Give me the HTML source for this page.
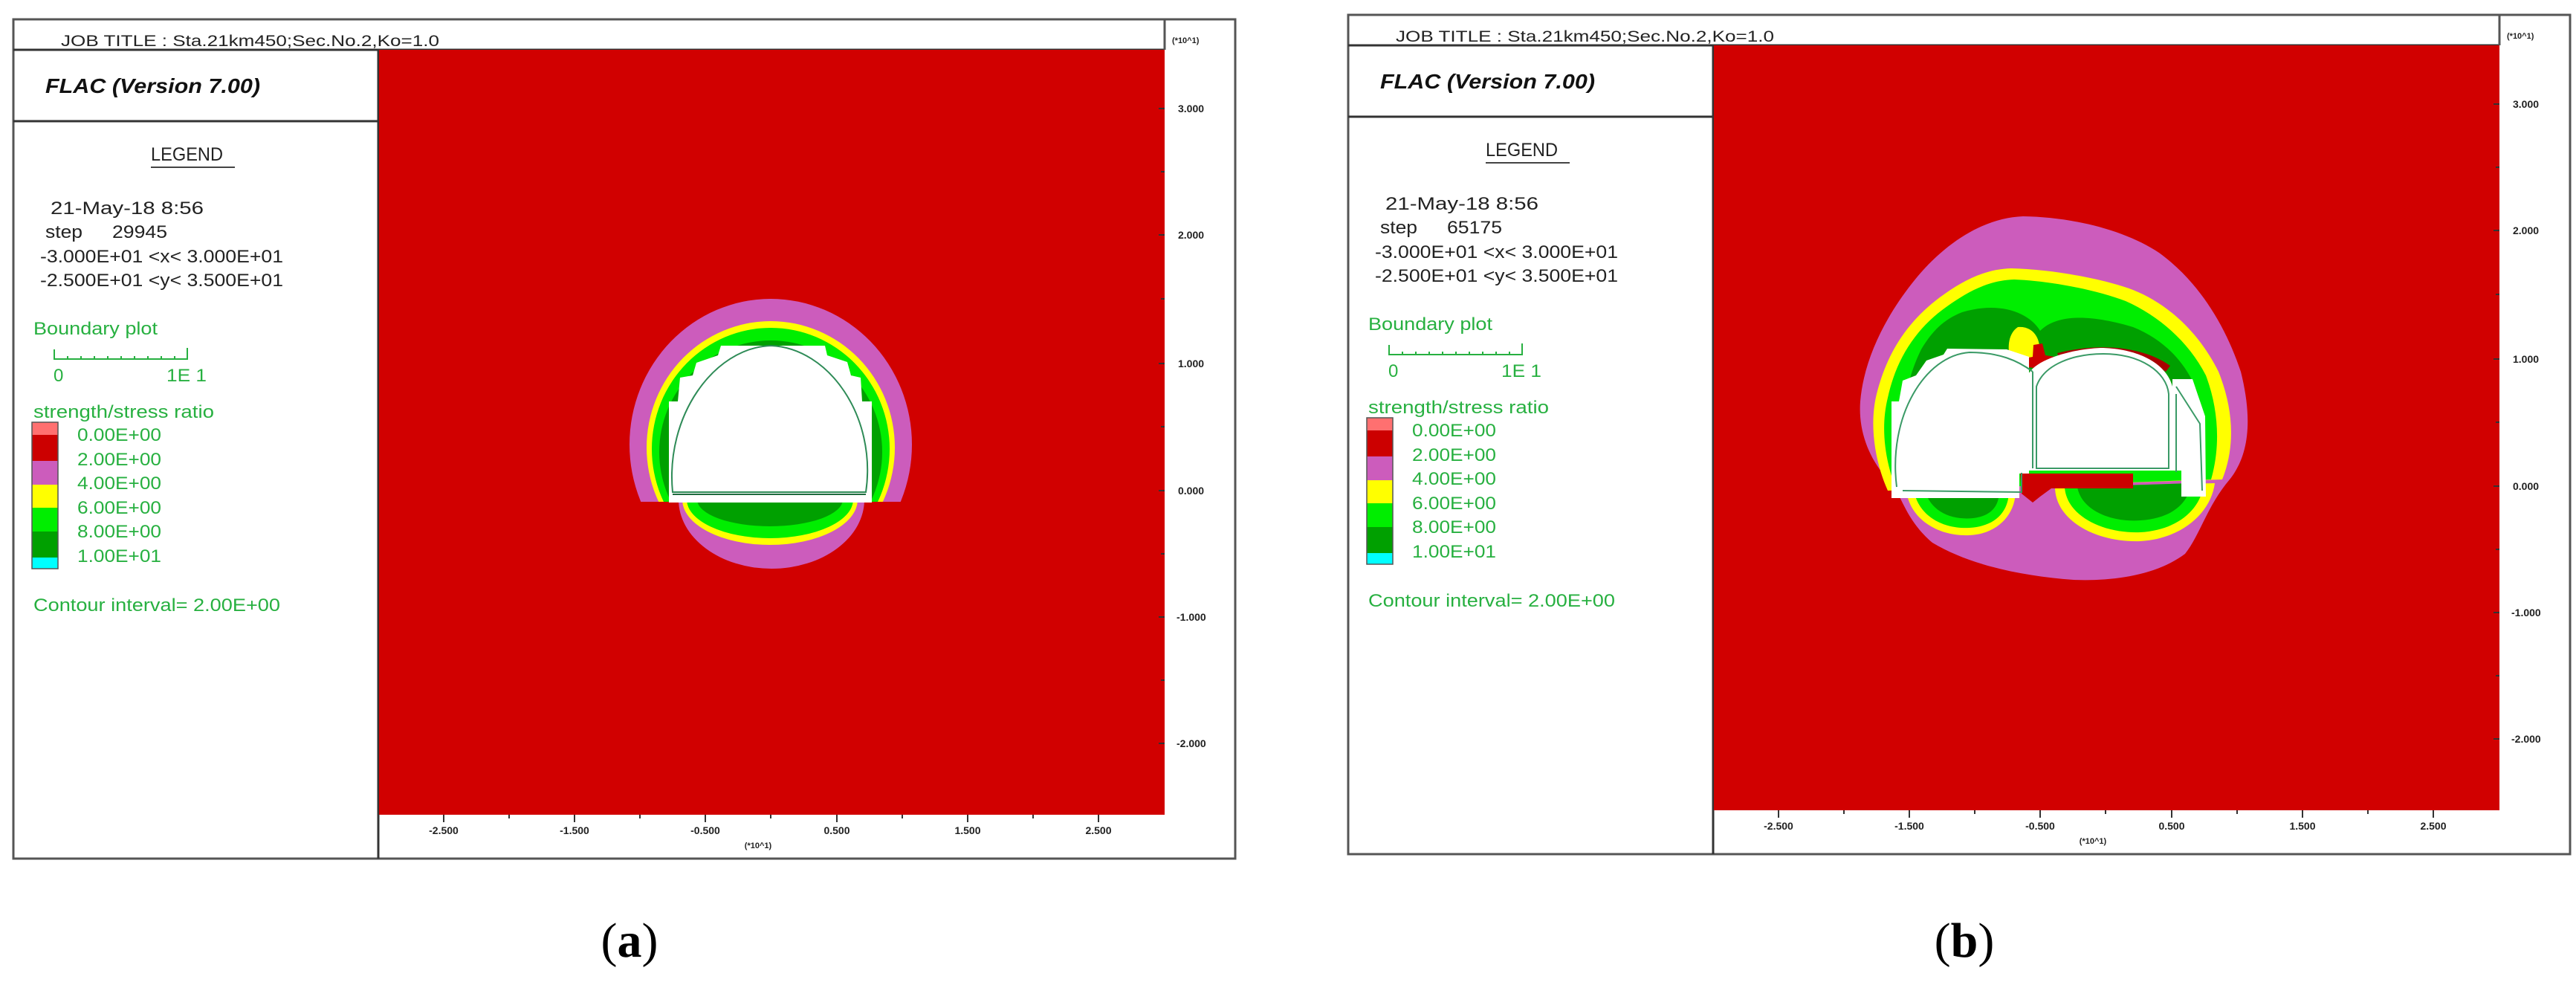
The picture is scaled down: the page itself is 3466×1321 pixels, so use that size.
<!DOCTYPE html>
<html><head><meta charset="utf-8"><style>html,body{margin:0;padding:0;background:#fff}svg{display:block}</style></head><body>
<svg width="3466" height="1321" viewBox="0 0 3466 1321" xmlns="http://www.w3.org/2000/svg" font-family="Liberation Sans, Arial, sans-serif">
<defs>
<clipPath id="ua"><rect x="800" y="380" width="500" height="295"/></clipPath>
<clipPath id="la"><rect x="800" y="674" width="500" height="200"/></clipPath>
<g id="frame">
<rect x="18" y="26" width="1644" height="1129" fill="#fff" stroke="#555" stroke-width="3"/>
<line x1="18" y1="67" x2="1567" y2="67" stroke="#333" stroke-width="3"/>
<line x1="18" y1="163" x2="509" y2="163" stroke="#333" stroke-width="3"/>
<line x1="509" y1="67" x2="509" y2="1155" stroke="#333" stroke-width="3"/>
<line x1="1567" y1="26" x2="1567" y2="67" stroke="#555" stroke-width="3"/>
<rect x="510" y="67" width="1057" height="1029" fill="#d10000"/>
<text x="82" y="62" font-size="21" fill="#222" textLength="509" lengthAdjust="spacingAndGlyphs">JOB TITLE : Sta.21km450;Sec.No.2,Ko=1.0</text>
<text x="61" y="125" font-size="28" font-weight="bold" font-style="italic" fill="#111" textLength="289" lengthAdjust="spacingAndGlyphs">FLAC (Version 7.00)</text>
<text x="203" y="216" font-size="25" fill="#222" textLength="97" lengthAdjust="spacingAndGlyphs">LEGEND</text>
<line x1="203" y1="225" x2="316" y2="225" stroke="#444" stroke-width="2"/>
<g font-size="24" fill="#222">
<text x="68" y="288" textLength="206" lengthAdjust="spacingAndGlyphs">21-May-18   8:56</text>
<text x="61" y="320" textLength="50" lengthAdjust="spacingAndGlyphs">step</text>
<text x="54" y="353" textLength="327" lengthAdjust="spacingAndGlyphs">-3.000E+01 &lt;x&lt; 3.000E+01</text>
<text x="54" y="385" textLength="327" lengthAdjust="spacingAndGlyphs">-2.500E+01 &lt;y&lt; 3.500E+01</text>
</g>
<g fill="#27b040" font-size="24">
<text x="45" y="450" textLength="167" lengthAdjust="spacingAndGlyphs">Boundary plot</text>
<path d="M73,470 V483 H252 V468 M91,479 V483 M109,479 V483 M127,479 V483 M145,479 V483 M163,479 V483 M181,479 V483 M199,479 V483 M217,479 V483 M235,479 V483" stroke="#27b040" stroke-width="2" fill="none"/>
<text x="72" y="513">0</text>
<text x="224" y="513" textLength="54" lengthAdjust="spacingAndGlyphs">1E 1</text>
<text x="45" y="562" textLength="243" lengthAdjust="spacingAndGlyphs">strength/stress ratio</text>
<text x="104" y="593" textLength="113" lengthAdjust="spacingAndGlyphs">0.00E+00</text>
<text x="104" y="626" textLength="113" lengthAdjust="spacingAndGlyphs">2.00E+00</text>
<text x="104" y="658" textLength="113" lengthAdjust="spacingAndGlyphs">4.00E+00</text>
<text x="104" y="691" textLength="113" lengthAdjust="spacingAndGlyphs">6.00E+00</text>
<text x="104" y="723" textLength="113" lengthAdjust="spacingAndGlyphs">8.00E+00</text>
<text x="104" y="756" textLength="113" lengthAdjust="spacingAndGlyphs">1.00E+01</text>
<text x="45" y="822" textLength="332" lengthAdjust="spacingAndGlyphs">Contour interval=  2.00E+00</text>
</g>
<rect x="43" y="568" width="35" height="17" fill="#ff7070"/>
<rect x="43" y="585" width="35" height="35" fill="#cc0000"/>
<rect x="43" y="620" width="35" height="32" fill="#cc5cbc"/>
<rect x="43" y="652" width="35" height="31" fill="#ffff00"/>
<rect x="43" y="683" width="35" height="32" fill="#00ee00"/>
<rect x="43" y="715" width="35" height="35" fill="#00a000"/>
<rect x="43" y="750" width="35" height="15" fill="#00ffff"/>
<rect x="43" y="568" width="35" height="197" fill="none" stroke="#555" stroke-width="1.5"/>
<path d="M1567,146 h-8 M1567,231 h-5 M1567,316 h-8 M1567,402 h-5 M1567,489 h-8 M1567,574 h-5 M1567,660 h-8 M1567,745 h-5 M1567,830 h-8 M1567,915 h-5 M1567,1000 h-8 M597,1096 v10 M685,1096 v5 M773,1096 v10 M861,1096 v5 M949,1096 v10 M1037,1096 v5 M1126,1096 v10 M1214,1096 v5 M1302,1096 v10 M1390,1096 v5 M1478,1096 v10" stroke="#333" stroke-width="2"/>
<g font-size="14" fill="#222" font-weight="bold">
<text x="1577" y="58" font-size="11">(*10^1)</text>
<text x="1585" y="151">3.000</text>
<text x="1585" y="321">2.000</text>
<text x="1585" y="494">1.000</text>
<text x="1585" y="665">0.000</text>
<text x="1583" y="835">-1.000</text>
<text x="1583" y="1005">-2.000</text>
<g text-anchor="middle">
<text x="597" y="1122">-2.500</text>
<text x="773" y="1122">-1.500</text>
<text x="949" y="1122">-0.500</text>
<text x="1126" y="1122">0.500</text>
<text x="1302" y="1122">1.500</text>
<text x="1478" y="1122">2.500</text>
<text x="1020" y="1141" font-size="11">(*10^1)</text>
</g>
</g>
</g>
</defs>

<!-- Panel A -->
<use href="#frame"/>
<text x="151" y="320" font-size="24" fill="#222" textLength="74" lengthAdjust="spacingAndGlyphs">29945</text>
<g clip-path="url(#ua)">
<ellipse cx="1037" cy="598" rx="190" ry="196" fill="#cc5cbc"/>
<ellipse cx="1037" cy="602" rx="167" ry="170" fill="#ffff00"/>
<ellipse cx="1037" cy="604" rx="160" ry="163" fill="#00ee00"/>
<ellipse cx="1037" cy="608" rx="150" ry="150" fill="#00a000"/>
</g>
<g clip-path="url(#la)">
<ellipse cx="1038" cy="672" rx="125" ry="93" fill="#cc5cbc"/>
<ellipse cx="1036" cy="672" rx="118" ry="61" fill="#ffff00"/>
<ellipse cx="1036" cy="672" rx="112" ry="52" fill="#00ee00"/>
<ellipse cx="1036" cy="672" rx="98" ry="36" fill="#00a000"/>
</g>
<path d="M900,676 L900,540 L912,540 L915,508 L932,505 L937,488 L966,478 L970,465 L1110,465 L1113,478 L1140,487 L1145,505 L1158,508 L1160,540 L1173,540 L1173,676 Z" fill="#fff"/>
<path d="M905,662 C895,560 960,468 1037,465 C1115,468 1180,560 1165,662 Z" fill="none" stroke="#2e8b57" stroke-width="2"/>
<line x1="905" y1="665" x2="1165" y2="665" stroke="#1f6b3f" stroke-width="2"/>

<!-- Panel B -->
<g transform="translate(1796,-6)"><use href="#frame"/></g>
<text x="1947" y="314" font-size="24" fill="#222" textLength="74" lengthAdjust="spacingAndGlyphs">65175</text>
<path d="M2722,291 C2790,292 2860,310 2905,340 C2960,380 2995,440 3015,500 C3030,560 3028,610 3000,645 C2970,680 2960,720 2940,745 C2900,775 2840,782 2790,780 C2720,775 2650,760 2600,730 C2565,700 2560,670 2545,650 C2515,620 2500,580 2503,540 C2508,480 2540,420 2580,372 C2620,325 2670,293 2722,291 Z" fill="#cc5cbc"/>
<path d="M2706,361 C2760,362 2830,375 2870,390 C2920,410 2960,450 2985,500 C3005,550 3008,600 2990,645 L2540,660 C2522,620 2515,570 2525,530 C2540,470 2570,430 2610,400 C2640,378 2670,362 2706,361 Z" fill="#ffff00"/>
<path d="M2710,376 C2760,378 2820,390 2860,405 C2905,425 2945,460 2968,505 C2985,550 2988,600 2975,645 L2552,660 C2536,620 2530,575 2540,535 C2552,480 2580,440 2620,412 C2648,392 2676,377 2710,376 Z" fill="#00ee00"/>
<path d="M2640,420 C2690,405 2730,420 2745,445 C2770,420 2820,425 2870,440 C2920,460 2950,500 2960,540 L2962,620 L2560,640 C2552,590 2560,520 2585,470 C2600,445 2615,430 2640,420 Z" fill="#00a000"/>
<path d="M2715,440 C2735,438 2745,455 2744,470 L2735,490 L2705,485 C2700,465 2703,448 2715,440 Z" fill="#ffff00"/>
<!-- lower lobes -->
<path d="M2565,660 C2570,700 2610,722 2650,720 C2690,718 2712,690 2712,660 Z" fill="#ffff00"/>
<path d="M2575,660 C2582,695 2615,712 2650,710 C2685,708 2703,688 2703,660 Z" fill="#00ee00"/>
<path d="M2590,660 C2598,688 2625,700 2655,697 C2680,694 2690,680 2690,660 Z" fill="#00a000"/>
<path d="M2765,655 C2765,700 2820,730 2880,728 C2935,725 2975,690 2980,650 Z" fill="#ffff00"/>
<path d="M2778,655 C2780,693 2828,718 2880,716 C2930,713 2962,685 2965,650 Z" fill="#00ee00"/>
<path d="M2795,655 C2800,685 2838,703 2880,700 C2925,697 2945,675 2948,650 Z" fill="#00a000"/>
<!-- red bits -->
<path d="M2718,637 L2870,637 L2870,657 L2760,657 L2745,668 L2735,676 L2720,664 Z" fill="#cc0000"/>
<path d="M2736,464 L2748,462 L2752,478 L2765,480 L2762,492 L2750,494 L2748,515 L2738,515 L2737,495 L2722,493 L2724,482 L2735,480 Z" fill="#cc0000"/>
<path d="M2768,475 C2820,462 2880,464 2920,492 L2914,500 C2880,475 2820,472 2772,484 Z" fill="#a80000"/>
<!-- white tunnels -->
<path d="M2545,670 L2545,540 L2555,540 L2560,512 L2578,505 L2592,485 L2615,477 L2620,469 L2700,470 L2730,480 L2730,637 L2717,637 L2717,670 Z" fill="#fff"/>
<path d="M2728,633 L2728,505 C2740,480 2800,468 2830,468 C2880,470 2915,490 2923,520 L2923,633 Z" fill="#fff"/>
<path d="M2923,510 L2950,510 L2967,560 L2968,668 L2935,668 L2935,633 L2923,633 Z" fill="#fff"/>
<g fill="none" stroke="#3a9a66" stroke-width="2">
<path d="M2552,655 C2540,560 2590,478 2650,474 C2690,474 2715,485 2735,500"/>
<path d="M2560,660 L2720,662 L2720,636"/>
<path d="M2740,630 L2740,520 C2750,490 2790,476 2830,476 C2880,476 2915,500 2918,530 L2918,630 Z"/>
<path d="M2735,630 L2735,500 M2928,520 L2960,570 L2963,660 M2928,530 L2928,635"/>
</g>

<!-- captions -->
<text x="847" y="1287" font-family="Liberation Serif, serif" font-size="66" text-anchor="middle" fill="#000">(<tspan font-weight="bold">a</tspan>)</text>
<text x="2643" y="1287" font-family="Liberation Serif, serif" font-size="66" text-anchor="middle" fill="#000">(<tspan font-weight="bold">b</tspan>)</text>
</svg>
</body></html>
